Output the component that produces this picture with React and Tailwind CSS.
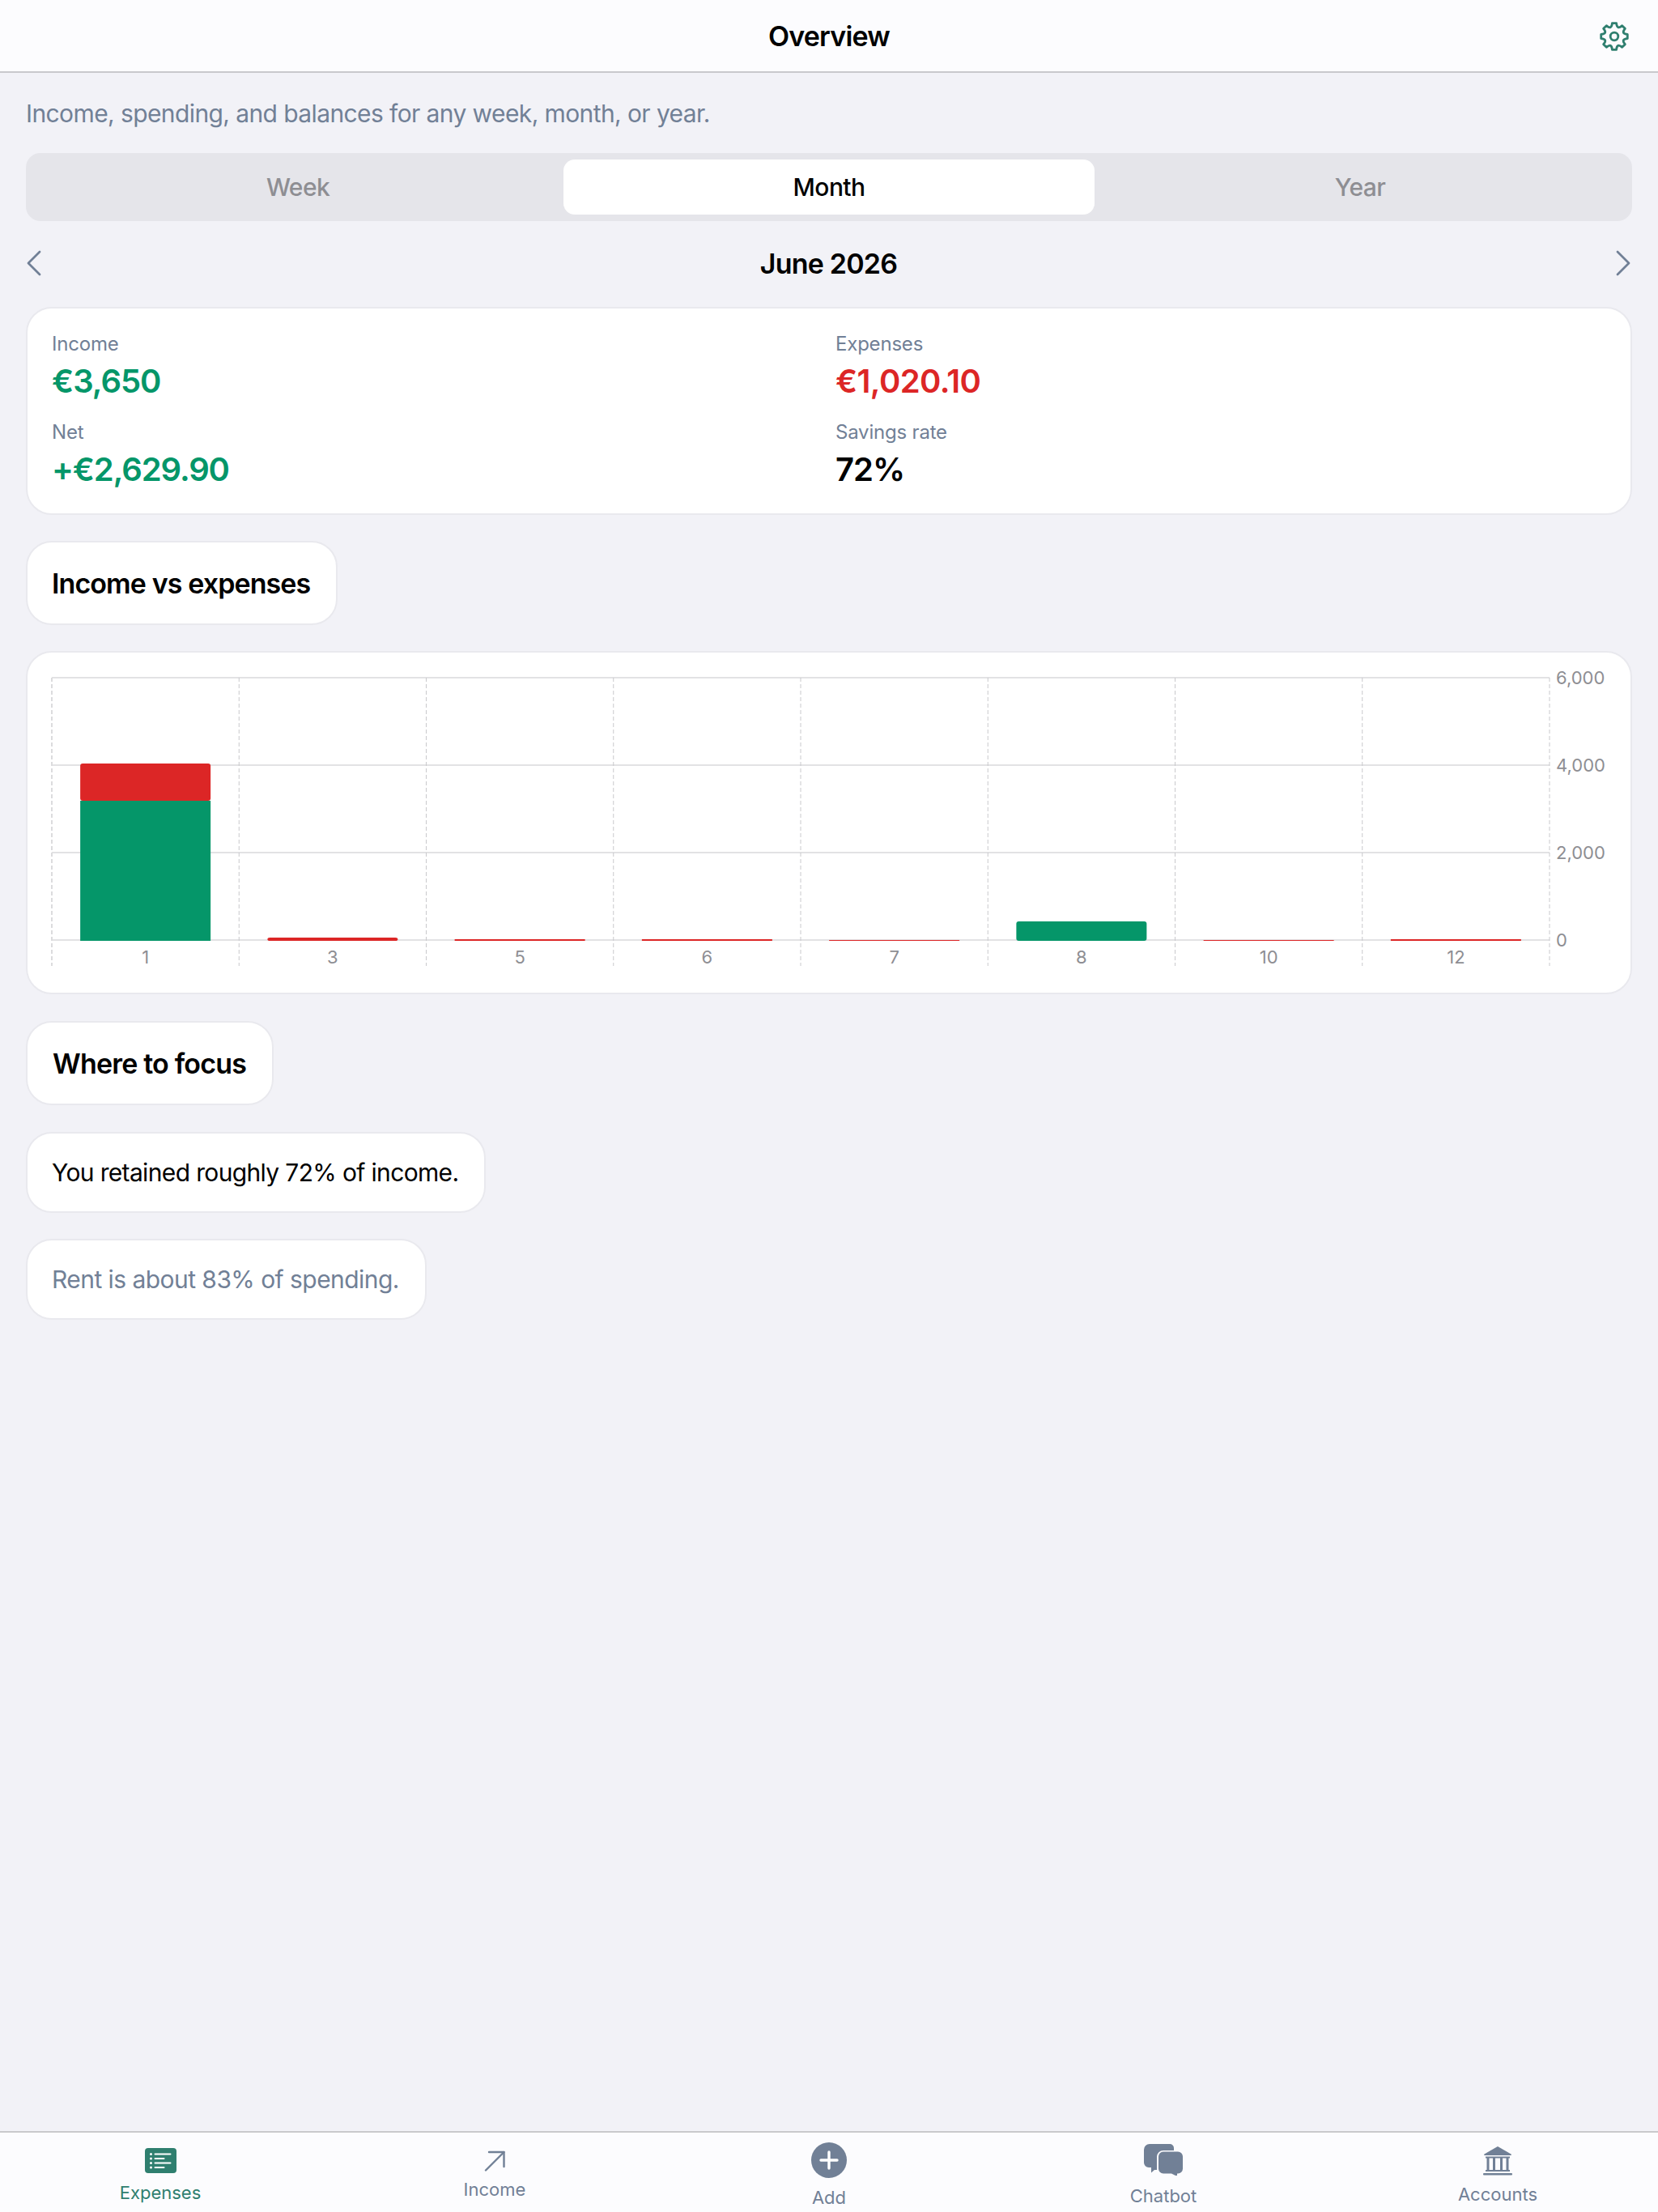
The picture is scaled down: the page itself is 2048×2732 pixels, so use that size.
import React from "react";
import { ChevronLeft, ChevronRight } from "lucide-react";

const TEAL = "#2f7f6f";
const SLATE = "#718096";

// chart geometry, all in page pixels relative to the svg origin
const PLOT_L = 30;
const PLOT_R = 1880;
const STEP = (PLOT_R - PLOT_L) / 8;
const BAR_W = 161;
const BASE = 355;

const bars = [
  { label: "1", parts: [{ h: 173, fill: "#059669" }, { h: 46, fill: "#dc2626" }] },
  { label: "3", parts: [{ h: 4, fill: "#dc2626" }] },
  { label: "5", parts: [{ h: 2, fill: "#dc2626" }] },
  { label: "6", parts: [{ h: 2, fill: "#dc2626" }] },
  { label: "7", parts: [{ h: 1, fill: "#dc2626" }] },
  { label: "8", parts: [{ h: 24, fill: "#059669" }] },
  { label: "10", parts: [{ h: 1, fill: "#dc2626" }] },
  { label: "12", parts: [{ h: 2, fill: "#dc2626" }] },
];

const ticks = [
  { y: 31, label: "6,000" },
  { y: 139, label: "4,000" },
  { y: 247, label: "2,000" },
  { y: 355, label: "0" },
];

function Chart() {
  return (
    <svg width="1980" height="420" viewBox="0 0 1980 420" className="block">
      {ticks.map((t) => (
        <g key={t.label}>
          <line x1={PLOT_L} x2={PLOT_R} y1={t.y} y2={t.y} stroke="#e2e2e4" strokeWidth="2" />
          <text x={PLOT_R + 8} y={t.y + 8} fontSize="22" fill="#8e8e93">{t.label}</text>
        </g>
      ))}
      {Array.from({ length: 9 }).map((_, i) => (
        <line
          key={i}
          x1={PLOT_L + STEP * i}
          x2={PLOT_L + STEP * i}
          y1={31}
          y2={387}
          stroke={i === 0 ? "#dcdcde" : "#c9c9cc"}
          strokeWidth={i === 0 ? 2 : 1}
          strokeDasharray="5 3"
        />
      ))}
      {bars.map((b, i) => {
        const x = PLOT_L + STEP * i + (STEP - BAR_W) / 2;
        let top = BASE + 1;
        return (
          <g key={b.label}>
            {b.parts.map((p, j) => {
              top -= p.h;
              const last = j === b.parts.length - 1;
              return (
                <rect key={j} x={x} y={top} width={BAR_W} height={p.h} fill={p.fill} rx={last && p.h > 3 ? 3 : 0} />
              );
            })}
            <text x={x + BAR_W / 2} y={384} fontSize="22" fill="#8e8e93" textAnchor="middle">{b.label}</text>
          </g>
        );
      })}
    </svg>
  );
}

function Stat({ label, value, color }) {
  return (
    <div className="flex flex-col">
      <span className="text-[24px] leading-[32px] tracking-[-0.2px] text-[#718096]">{label}</span>
      <span className={`text-[40px] leading-[48px] font-semibold mt-[6px] ${color}`}>{value}</span>
    </div>
  );
}

// eight rounded teeth around a small hub
function gearPath() {
  const pt = (r, deg) => {
    const a = ((deg - 90) * Math.PI) / 180;
    return `${(21 + r * Math.cos(a)).toFixed(2)} ${(21 + r * Math.sin(a)).toFixed(2)}`;
  };
  let d = `M${pt(16.5, -9)}`;
  for (let i = 0; i < 8; i++) {
    const a = i * 45;
    d += ` L${pt(16.5, a + 9)} Q${pt(8.5, a + 22.5)} ${pt(16.5, a + 36)}`;
  }
  return d + "Z";
}

function GearIcon({ className }) {
  return (
    <svg width="42" height="42" viewBox="0 0 42 42" fill="none" stroke={TEAL} strokeWidth="2.8" strokeLinejoin="round" className={className}>
      <path d={gearPath()} />
      <circle cx="21" cy="21" r="4.800" />
    </svg>
  );
}

function ExpensesIcon() {
  return (
    <svg width="39" height="31" viewBox="0 0 39 31">
      <rect width="39" height="31" rx="4" fill={TEAL} />
      <g fill="#fff">
        <circle cx="7.5" cy="7.5" r="1.5" />
        <circle cx="7.5" cy="13" r="1.5" />
        <circle cx="7.5" cy="18.5" r="1.5" />
        <circle cx="7.5" cy="24" r="1.5" />
        <rect x="11.5" y="6.5" width="21" height="2" rx="1" />
        <rect x="11.5" y="12" width="13" height="2" rx="1" />
        <rect x="11.5" y="17.5" width="21" height="2" rx="1" />
        <rect x="11.5" y="23" width="13" height="2" rx="1" />
      </g>
    </svg>
  );
}

function IncomeIcon() {
  return (
    <svg width="26" height="26" viewBox="0 0 26 26" fill="none" stroke={SLATE} strokeWidth="2.4" strokeLinecap="round" strokeLinejoin="round">
      <path d="M2 24.5 24.5 2" />
      <path d="M6 2h18.5v18" />
    </svg>
  );
}

function AddIcon() {
  return (
    <svg width="44" height="44" viewBox="0 0 44 44">
      <circle cx="22" cy="22" r="22" fill={SLATE} />
      <path d="M22 12v20M12 22h20" stroke="#fff" strokeWidth="3.4" strokeLinecap="round" />
    </svg>
  );
}

function ChatIcon() {
  return (
    <svg width="48" height="39" viewBox="0 0 48 39">
      <path d="M7 0h25a5 5 0 0 1 5 5v3H24a8 8 0 0 0-8 8v16h-3l-4 3.500V29H6a6 6 0 0 1-6-6V7a7 7 0 0 1 7-7Z" fill={SLATE} />
      <path d="M24 9.500h18a6 6 0 0 1 6 6v15a6 6 0 0 1-6 6h-1v2.500l-1 .5-6-3H24a6 6 0 0 1-6-6v-15a6 6 0 0 1 6-6Z" fill={SLATE} />
    </svg>
  );
}

function BankIcon() {
  return (
    <svg width="36" height="36" viewBox="0 0 36 36" fill={SLATE}>
      <path d="M18 0 34.500 9.500c.8.500.5 1.500-.4 1.500H1.900c-.9 0-1.200-1-.4-1.500Z" />
      <rect x="3" y="12.500" width="30" height="2" />
      <rect x="4.500" y="14" width="3" height="15" />
      <rect x="12" y="14" width="3" height="15" />
      <rect x="21" y="14" width="3" height="15" />
      <rect x="28.500" y="14" width="3" height="15" />
      <rect x="3" y="29" width="30" height="2" />
      <rect x="0" y="33" width="36" height="2.500" rx="1" />
    </svg>
  );
}

const tabs = [
  { label: "Expenses", Icon: ExpensesIcon, box: "pt-[19px] gap-[11px] text-[#2f7f6f]" },
  { label: "Income", Icon: IncomeIcon, box: "pt-[22px] gap-[9px] text-[#718096]" },
  { label: "Add", Icon: AddIcon, box: "pt-[12px] gap-[11px] text-[#718096]" },
  { label: "Chatbot", Icon: ChatIcon, box: "pt-[14px] gap-[12px] text-[#718096]" },
  { label: "Accounts", Icon: BankIcon, box: "pt-[17px] gap-[10px] text-[#718096]" },
];

export default function App() {
  return (
    <div className="h-[2732px] bg-[#f2f2f7] flex flex-col font-['Inter',sans-serif] overflow-hidden">
      {/* Header */}
      <div className="relative h-[90px] shrink-0 bg-[#fcfcfe] border-b-2 border-[#c9c9cc] flex items-center justify-center">
        <span className="text-[34px] font-semibold tracking-[-0.8px] text-black">Overview</span>
        <GearIcon className="absolute right-[33px] top-[24px]" />
      </div>

      {/* Content */}
      <div className="flex-1 px-[32px] pt-[30px]">
        <p className="text-[30px] leading-[40px] tracking-[-0.6px] text-[#718096]">
          Income, spending, and balances for any week, month, or year.
        </p>

        <div className="mt-[29px] h-[84px] rounded-[18px] bg-[#e5e5ea] p-[8px] grid grid-cols-3">
          <div className="flex items-center justify-center text-[30px] font-medium tracking-[-0.6px] text-[#8e8e93]">Week</div>
          <div className="flex items-center justify-center rounded-[14px] bg-white text-[30px] font-medium tracking-[-0.6px] text-black">Month</div>
          <div className="flex items-center justify-center text-[30px] font-medium tracking-[-0.6px] text-[#8e8e93]">Year</div>
        </div>

        <div className="mt-[30px] h-[44px] flex items-center justify-between">
          <ChevronLeft size={56} strokeWidth={1.2} color={SLATE} className="-ml-[18px]" />
          <span className="text-[34px] font-semibold tracking-[-0.8px] text-black">June 2026</span>
          <ChevronRight size={56} strokeWidth={1.2} color={SLATE} className="-mr-[17px]" />
        </div>

        <div className="mt-[32px] rounded-[32px] bg-white border-2 border-[#e9e9ee] pl-[30px] pr-[32px] pt-[28px] pb-[30px] grid grid-cols-[968px_1fr] gap-y-[23px]">
          <Stat label="Income" value="€3,650" color="tracking-[-1px] text-[#059669]" />
          <Stat label="Expenses" value="€1,020.10" color="tracking-[-0.6px] text-[#dc2626]" />
          <Stat label="Net" value="+€2,629.90" color="tracking-[-1.1px] text-[#059669]" />
          <Stat label="Savings rate" value="72%" color="tracking-[-1px] text-black" />
        </div>

        <div className="mt-[32px] w-fit rounded-[32px] bg-white border-2 border-[#e9e9ee] pl-[30px] pr-[32px] h-[104px] flex items-center">
          <span className="text-[34px] font-semibold tracking-[-0.9px] text-black">Income vs expenses</span>
        </div>

        <div className="mt-[32px] h-[424px] rounded-[32px] bg-white border-2 border-[#e9e9ee]">
          <Chart />
        </div>

        <div className="mt-[33px] w-fit rounded-[32px] bg-white border-2 border-[#e9e9ee] pl-[31px] pr-[32px] h-[104px] flex items-center">
          <span className="text-[34px] font-semibold tracking-[-0.8px] text-black">Where to focus</span>
        </div>

        <div className="mt-[33px] w-fit rounded-[32px] bg-white border-2 border-[#e9e9ee] pl-[30px] pr-[32px] h-[100px] flex items-center">
          <span className="text-[30px] tracking-[-0.65px] text-black">You retained roughly 72% of income.</span>
        </div>

        <div className="mt-[32px] w-fit rounded-[32px] bg-white border-2 border-[#e9e9ee] pl-[30px] pr-[32px] h-[100px] flex items-center">
          <span className="text-[30px] tracking-[-0.55px] text-[#718096]">Rent is about 83% of spending.</span>
        </div>
      </div>

      {/* Tab bar */}
      <div className="h-[100px] shrink-0 bg-[#fcfcfe] border-t-2 border-[#c9c9cc] px-[98px] flex justify-between">
        {tabs.map(({ label, Icon, box }) => (
          <div key={label} className={`w-[200px] flex flex-col items-center ${box}`}>
            <Icon />
            <span className="text-[22px] leading-[26px]">{label}</span>
          </div>
        ))}
      </div>
    </div>
  );
}
